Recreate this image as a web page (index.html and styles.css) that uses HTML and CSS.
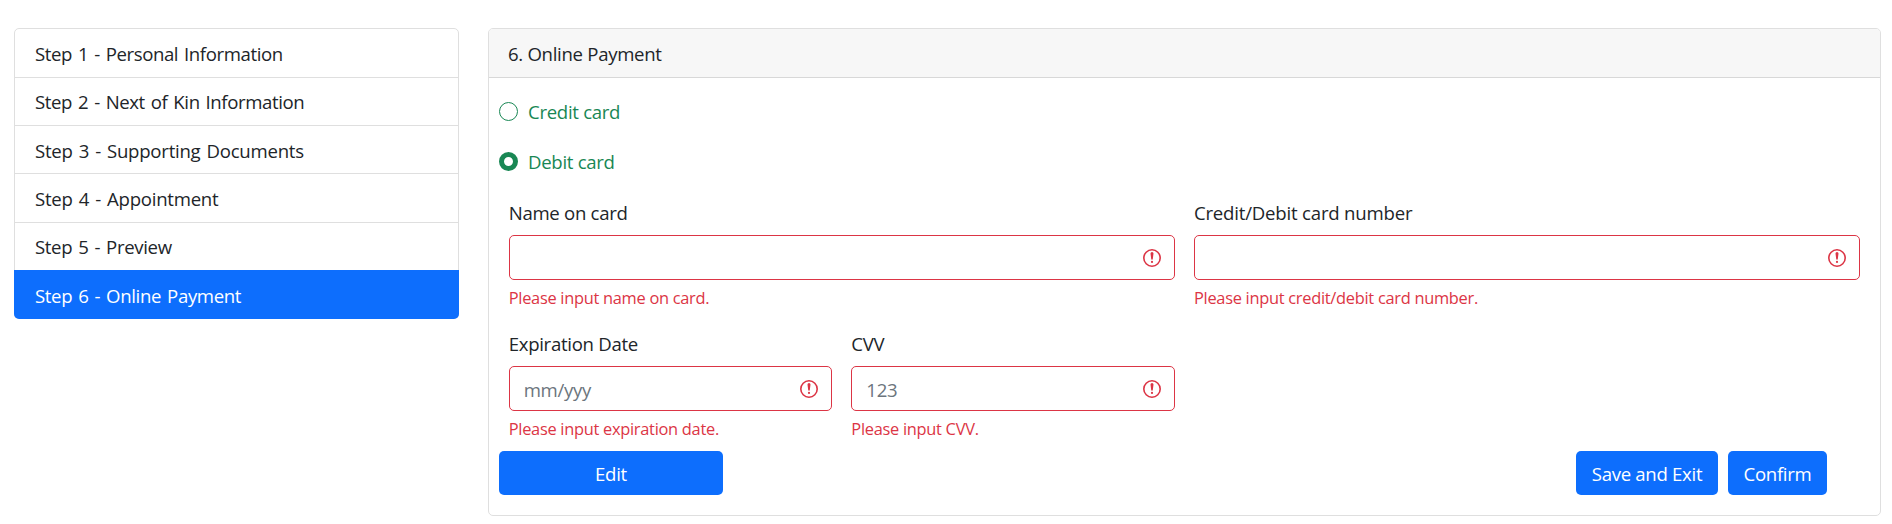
FILE: index.html
```html
<!DOCTYPE html>
<html lang="en">
<head>
<meta charset="utf-8">
<title>Online Payment</title>
<link rel="stylesheet" href="styles.css">
</head>
<body>
<svg class="defs" aria-hidden="true">
  <symbol id="alert" viewBox="0 0 18 18">
    <circle cx="9" cy="9" r="8.2" fill="none" stroke="currentColor" stroke-width="1.6"/>
    <path d="M7.5 4.4a1.5 1.5 0 0 1 3 0L9.8 10a.8.8 0 0 1-1.6 0z" fill="currentColor"/>
    <circle cx="9" cy="12.9" r="1.1" fill="currentColor"/>
  </symbol>
</svg>
<div class="page">
  <nav class="steps">
    <a class="step snug"><span>Step 1 - Personal Information</span></a>
    <a class="step snug"><span>Step 2 - Next of Kin Information</span></a>
    <a class="step loose"><span>Step 3 - Supporting Documents</span></a>
    <a class="step loose"><span>Step 4 - Appointment</span></a>
    <a class="step"><span>Step 5 - Preview</span></a>
    <a class="step active"><span>Step 6 - Online Payment</span></a>
  </nav>
  <main class="card">
    <header class="card-header"><span>6. Online Payment</span></header>
    <div class="card-body">
      <label class="radio"><i class="dot"></i><span>Credit card</span></label>
      <label class="radio"><i class="dot checked"></i><span>Debit card</span></label>
      <div class="fields">
        <div class="field wide">
          <label class="label">Name on card</label>
          <div class="input"><span></span><svg class="icon"><use href="#alert"/></svg></div>
          <p class="error">Please input name on card.</p>
        </div>
        <div class="field wide">
          <label class="label loose">Credit/Debit card number</label>
          <div class="input"><span></span><svg class="icon"><use href="#alert"/></svg></div>
          <p class="error">Please input credit/debit card number.</p>
        </div>
        <div class="field">
          <label class="label">Expiration Date</label>
          <div class="input"><span>mm/yyy</span><svg class="icon"><use href="#alert"/></svg></div>
          <p class="error">Please input expiration date.</p>
        </div>
        <div class="field">
          <label class="label">CVV</label>
          <div class="input"><span>123</span><svg class="icon"><use href="#alert"/></svg></div>
          <p class="error">Please input CVV.</p>
        </div>
      </div>
      <div class="actions">
        <button class="btn edit">Edit</button>
        <button class="btn save">Save and Exit</button>
        <button class="btn confirm">Confirm</button>
      </div>
    </div>
  </main>
</div>
</body>
</html>
```
FILE: styles.css
```css
* { box-sizing: border-box; }
body {
  margin: 0;
  background: #fff;
  color: #212529;
  font-family: "Open Sans", "Noto Sans", sans-serif;
  font-size: 18.6px;
  letter-spacing: -0.3px;
  line-height: 28px;
}
.defs { position: absolute; width: 0; height: 0; }
.page {
  display: grid;
  grid-template-columns: 445px 1393px;
  column-gap: 29px;
  align-items: start;
  padding: 28px 0 0 14px;
}
.steps {
  border: 1px solid #dfdfdf;
  border-radius: 5px;
  height: 291px;
  display: grid;
  grid-template-rows: 49px 48px 48px 49px 47px 49px;
  letter-spacing: -0.35px;
  word-spacing: 1.5px;
}
.step {
  display: flex;
  align-items: center;
  padding: 1px 20px 0;
  border-bottom: 1px solid #dfdfdf;
}
.step.snug { letter-spacing: -0.4px; }
.step.loose { letter-spacing: -0.25px; }
.label.loose { letter-spacing: -0.2px; }
.step:nth-child(3) { padding-top: 3px; }
.step:nth-child(5) { border-bottom: 0; }
.step.active {
  margin: 0 -1px;
  padding: 3px 21px 0;
  border: 0;
  border-radius: 0 0 5px 5px;
  background: #0d6efd;
  color: #fff;
}
.card {
  height: 488px;
  border: 1px solid #dfdfdf;
  border-radius: 5px;
}
.card-header {
  height: 49px;
  padding: 11px 19px 0;
  background: #f7f7f7;
  border-bottom: 1px solid #d8d8d8;
  border-radius: 4px 4px 0 0;
}
.card-body { padding: 19px 20px 0 10px; }
.radio {
  display: flex;
  align-items: center;
  height: 28px;
  margin-bottom: 22px;
  color: #198754;
}
.radio span { padding-top: 1px; }
.dot {
  width: 19px;
  height: 19px;
  margin-right: 10px;
  border: 1px solid #198754;
  border-radius: 50%;
}
.dot.checked { border-width: 5px; }
.fields {
  display: grid;
  grid-template-columns: repeat(4, 1fr);
  column-gap: 19.2px;
  row-gap: 19px;
  padding: 2px 0 0 9.7px;
}
.field { height: 112px; }
.field.wide { grid-column: span 2; }
.label { display: block; height: 36px; }
.input {
  display: flex;
  align-items: center;
  justify-content: space-between;
  height: 45px;
  padding: 0 13px 0 14px;
  border: 1px solid #dc3545;
  border-radius: 5px;
  color: #6c757d;
}
.input span { padding-top: 3px; }
.icon { width: 18px; height: 18px; color: #dc3545; }
.error {
  margin: 4px 0 0;
  color: #dc3545;
  font-size: 16.4px;
  letter-spacing: -0.28px;
}
.actions { display: flex; padding-top: 9px; }
.btn {
  height: 44px;
  padding: 2px 0 0;
  border: 0;
  border-radius: 5px;
  background: #0d6efd;
  color: #fff;
  font: inherit;
  letter-spacing: inherit;
}
.edit { width: 224px; }
.save { width: 142px; margin-left: auto; }
.confirm { width: 99px; margin: 0 33px 0 10px; }
```
